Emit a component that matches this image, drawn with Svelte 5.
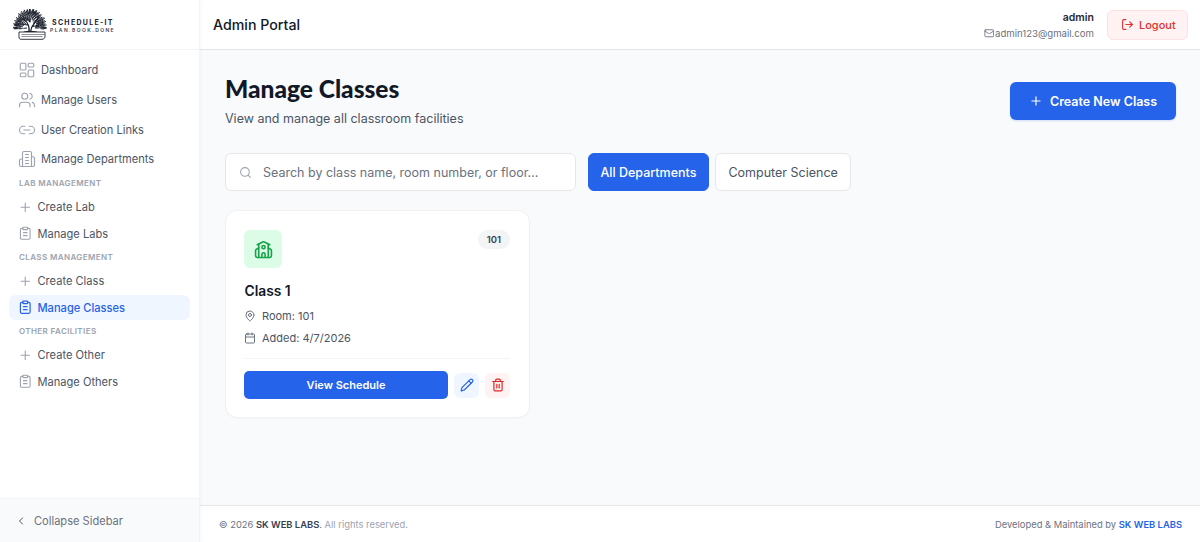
<script>
  const top = [
    { label: 'Dashboard', icon: 'grid' },
    { label: 'Manage Users', icon: 'users' },
    { label: 'User Creation Links', icon: 'link' },
    { label: 'Manage Departments', icon: 'building' }
  ];
  const sections = [
    { title: 'LAB MANAGEMENT', items: [{ label: 'Create Lab', icon: 'plus' }, { label: 'Manage Labs', icon: 'clip' }] },
    { title: 'CLASS MANAGEMENT', items: [{ label: 'Create Class', icon: 'plus' }, { label: 'Manage Classes', icon: 'clip', active: true }] },
    { title: 'OTHER FACILITIES', items: [{ label: 'Create Other', icon: 'plus' }, { label: 'Manage Others', icon: 'clip' }] }
  ];
  // Feathery canopy of the logo tree: short radial leaf strokes on a dome.
  const leaves = Array.from({ length: 135 }, (_, i) => {
    const t = (i * 0.618034) % 1;
    const a = Math.PI * (0.96 + 1.08 * t);
    const r = 5.500 + 12 * Math.sqrt(((i * 0.7548777) % 1));
    const x = 17 + Math.cos(a) * r * 0.88;
    const y = 18.5 + Math.sin(a) * r * 1.0;
    const dx = Math.cos(a) * 1.500;
    const dy = Math.sin(a) * 1.500;
    return { x1: x - dx, y1: y - dy, x2: x + dx, y2: y + dy };
  });
</script>

{#snippet navIcon(name)}
  <svg class="ic" viewBox="0 0 24 24" fill="none" stroke="currentColor" stroke-linecap="round" stroke-linejoin="round">
    {#if name === 'grid'}
      <rect x="3" y="3" width="7.5" height="9" rx="1.5" /><rect x="13.5" y="3" width="7.5" height="5" rx="1.5" /><rect x="13.5" y="12" width="7.5" height="9" rx="1.5" /><rect x="3" y="16" width="7.5" height="5" rx="1.5" />
    {:else if name === 'users'}
      <path d="M16 21v-2a4 4 0 0 0-4-4H6a4 4 0 0 0-4 4v2" /><circle cx="9" cy="7" r="4" /><path d="M22 21v-2a4 4 0 0 0-3-3.87" /><path d="M16 3.13a4 4 0 0 1 0 7.75" />
    {:else if name === 'link'}
      <path d="M9 17H7A5 5 0 0 1 7 7h2" /><path d="M15 7h2a5 5 0 1 1 0 10h-2" /><line x1="8" y1="12" x2="16" y2="12" />
    {:else if name === 'building'}
      <path d="M6 22V4a2 2 0 0 1 2-2h8a2 2 0 0 1 2 2v18Z" /><path d="M6 12H4a2 2 0 0 0-2 2v6a2 2 0 0 0 2 2h2" /><path d="M18 9h2a2 2 0 0 1 2 2v9a2 2 0 0 1-2 2h-2" /><path d="M10 6h4M10 10h4M10 14h4M10 18h4" />
    {:else if name === 'plus'}
      <path d="M5 12h14M12 5v14" />
    {:else if name === 'clip'}
      <rect x="8" y="2" width="8" height="4" rx="1" /><path d="M16 4h2a2 2 0 0 1 2 2v14a2 2 0 0 1-2 2H6a2 2 0 0 1-2-2V6a2 2 0 0 1 2-2h2" /><path d="M9 11h6M9 16h6" />
    {/if}
  </svg>
{/snippet}

<div class="app">
  <aside class="sidebar">
    <div class="brand">
      <svg class="tree" viewBox="0 0 34 32" aria-hidden="true">
        <g stroke="#1f2430" stroke-width="1" stroke-linecap="round">
          {#each leaves as l}
            <line x1={l.x1} y1={l.y1} x2={l.x2} y2={l.y2} />
          {/each}
        </g>
        <g stroke="#1f2430" fill="none" stroke-linecap="round">
          <path d="M16 23c.6-3.500.2-6-2-9.500M14 13.500L9 9M14.500 16l-7-1" stroke-width="1.200" />
          <path d="M17.500 23c.4-3.500 1.500-6 4-9l3.500-4M19 17.500l6.500-1" stroke-width="1.200" />
        </g>
        <path d="M11 23c3-.7 9-.7 13 0" stroke="#1f2430" stroke-width="1.100" fill="none" />
        <path d="M6 23h26v5.500l-2 1.800H8c-1.400 0-2-.8-2-2.300z" fill="#fff" stroke="#1f2430" stroke-width=".9" />
        <path d="M8.500 25.500h23M8.500 27.500h21" stroke="#1f2430" stroke-width=".5" />
      </svg>
      <div class="brand-text">
        <div class="brand-name">SCHEDULE-IT</div>
        <div class="brand-sub">PLAN.BOOK.DONE</div>
      </div>
    </div>

    <nav class="nav">
      <div class="top-links">
        {#each top as item}
          <div class="top-link">{@render navIcon(item.icon)}<span>{item.label}</span></div>
        {/each}
      </div>
      {#each sections as s}
        <div class="sec-title">{s.title}</div>
        {#each s.items as item}
          <div class="sub-link" class:active={item.active}>{@render navIcon(item.icon)}<span>{item.label}</span></div>
        {/each}
      {/each}
    </nav>

    <div class="collapse">
      <svg viewBox="0 0 24 24" fill="none" stroke="currentColor" stroke-width="2" stroke-linecap="round" stroke-linejoin="round"><path d="m15 18-6-6 6-6" /></svg>
      <span>Collapse Sidebar</span>
    </div>
  </aside>

  <div class="right">
    <header class="header">
      <div class="portal">Admin Portal</div>
      <div class="head-right">
        <div class="user">
          <div class="user-name">admin</div>
          <div class="user-mail">
            <svg viewBox="0 0 24 24" fill="none" stroke="currentColor" stroke-width="2" stroke-linecap="round" stroke-linejoin="round"><rect x="2" y="4" width="20" height="16" rx="2" /><path d="m22 7-8.970 5.700a1.940 1.940 0 0 1-2.060 0L2 7" /></svg>
            admin123@gmail.com
          </div>
        </div>
        <button class="logout">
          <svg viewBox="0 0 24 24" fill="none" stroke="currentColor" stroke-width="2" stroke-linecap="round" stroke-linejoin="round"><path d="M9 21H5a2 2 0 0 1-2-2V5a2 2 0 0 1 2-2h4" /><path d="m16 17 5-5-5-5" /><path d="M21 12H9" /></svg>
          Logout
        </button>
      </div>
    </header>

    <main class="main">
      <div class="title-row">
        <div class="title-block">
          <h1>Manage Classes</h1>
          <p>View and manage all classroom facilities</p>
        </div>
        <button class="create">
          <svg viewBox="0 0 24 24" fill="none" stroke="currentColor" stroke-width="2" stroke-linecap="round"><path d="M5 12h14M12 5v14" /></svg>
          Create New Class
        </button>
      </div>

      <div class="filters">
        <div class="search">
          <svg viewBox="0 0 24 24" fill="none" stroke="currentColor" stroke-width="2" stroke-linecap="round"><circle cx="11" cy="11" r="8" /><path d="m21 21-4.300-4.300" /></svg>
          <span>Search by class name, room number, or floor...</span>
        </div>
        <button class="tab on">All Departments</button>
        <button class="tab">Computer Science</button>
      </div>

      <article class="card">
        <div class="card-top">
          <div class="school">
            <svg viewBox="0 0 24 24" fill="none" stroke="currentColor" stroke-width="2" stroke-linecap="round" stroke-linejoin="round"><path d="M14 22v-4a2 2 0 1 0-4 0v4" /><path d="m18 10 3.450 1.930A2 2 0 0 1 22 13.500V20a2 2 0 0 1-2 2H4a2 2 0 0 1-2-2v-6.500a2 2 0 0 1 .55-1.570L6 10" /><path d="M18 5v17" /><path d="m4 6 7.100-3.550a2 2 0 0 1 1.800 0L20 6" /><path d="M6 5v17" /><circle cx="12" cy="9" r="2" /></svg>
          </div>
          <span class="badge">101</span>
        </div>
        <h2>Class 1</h2>
        <div class="metas">
          <div class="meta">
            <svg viewBox="0 0 24 24" fill="none" stroke="currentColor" stroke-width="2" stroke-linecap="round" stroke-linejoin="round"><path d="M20 10c0 5-5.500 10.200-7.400 11.800a1 1 0 0 1-1.200 0C9.500 20.200 4 15 4 10a8 8 0 0 1 16 0" /><circle cx="12" cy="10" r="3" /></svg>
            Room: 101
          </div>
          <div class="meta">
            <svg viewBox="0 0 24 24" fill="none" stroke="currentColor" stroke-width="2" stroke-linecap="round" stroke-linejoin="round"><path d="M8 2v4M16 2v4" /><rect x="3" y="4" width="18" height="18" rx="2" /><path d="M3 10h18" /></svg>
            Added: 4/7/2026
          </div>
        </div>
        <div class="actions">
          <button class="view">View Schedule</button>
          <button class="sq edit" aria-label="Edit">
            <svg viewBox="0 0 24 24" fill="none" stroke="currentColor" stroke-width="2" stroke-linecap="round" stroke-linejoin="round"><path d="M21.170 6.810a1 1 0 0 0-3.990-3.990L3.840 16.170a2 2 0 0 0-.5.830l-1.320 4.350a.5.500 0 0 0 .62.620l4.350-1.320a2 2 0 0 0 .83-.5z" /><path d="m15 5 4 4" /></svg>
          </button>
          <button class="sq del" aria-label="Delete">
            <svg viewBox="0 0 24 24" fill="none" stroke="currentColor" stroke-width="2" stroke-linecap="round" stroke-linejoin="round"><path d="M3 6h18" /><path d="M19 6v14c0 1-1 2-2 2H7c-1 0-2-1-2-2V6" /><path d="M8 6V4c0-1 1-2 2-2h4c1 0 2 1 2 2v2" /><path d="M10 11v6M14 11v6" /></svg>
          </button>
        </div>
      </article>
    </main>

    <footer class="footer">
      <div>© 2026 <b>SK WEB LABS</b>. <span class="muted">All rights reserved.</span></div>
      <div>Developed &amp; Maintained by <b class="blue">SK WEB LABS</b></div>
    </footer>
  </div>
</div>

<style>
  :global(body) { margin: 0; background: #f9fafb; }
  * { box-sizing: border-box; }
  .app { display: flex; width: 1200px; height: 542px; overflow: hidden; font-family: Inter, "Liberation Sans", sans-serif; color: #111827; }
  button { font-family: inherit; cursor: pointer; }

  .sidebar { width: 200px; flex: none; display: flex; flex-direction: column; background: #fff; border-right: 1px solid #f3f4f6; box-shadow: 1px 0 3px rgba(0,0,0,.03); z-index: 2; }
  .brand { height: 50px; flex: none; display: flex; align-items: center; gap: 3px; padding-left: 13px; border-bottom: 1px solid #f3f4f6; }
  .tree { width: 34px; height: 32px; flex: none; margin-top: 1px; }
  .brand-text { margin-top: 3px; }
  .brand-name { font-weight: 700; font-size: 7px; letter-spacing: 1.300px; color: #1f2430; line-height: 9px; padding-left: 2px; }
  .brand-sub { font-weight: 600; font-size: 5px; letter-spacing: 1.400px; color: #374151; line-height: 7px; }

  .nav { flex: 1; display: flex; flex-direction: column; padding: 5.500px 9px 0; }
  .top-links { display: flex; flex-direction: column; margin-bottom: -1.300px; }
  .top-link { height: 29.700px; display: flex; align-items: center; gap: 5.500px; padding-left: 8.500px; font-size: 11.100px; color: #4b5563; }
  .top-link .ic { width: 18px; height: 18px; color: #9ca3af; flex: none; stroke-width: 1.500; }
  .sec-title { height: 21px; flex: none; display: flex; align-items: center; padding-left: 10px; font-size: 8px; font-weight: 600; letter-spacing: .4px; color: #9ca3af; line-height: 1; }
  .sub-link { height: 25px; margin: .75px 0; display: flex; align-items: center; gap: 5px; padding-left: 9px; font-size: 11.100px; color: #4b5563; border-radius: 7px; flex: none; }
  .sub-link .ic { width: 14.500px; height: 14.500px; color: #9ca3af; flex: none; stroke-width: 1.800; }
  .sub-link.active { background: #eff6ff; color: #2563eb; font-weight: 500; }
  .sub-link.active .ic { color: #2563eb; stroke-width: 2; }

  .collapse { height: 44px; flex: none; display: flex; align-items: center; gap: 7px; padding-left: 15px; background: #f9fafb; border-top: 1px solid #f3f4f6; color: #6b7280; font-size: 11.100px; }
  .collapse svg { width: 12px; height: 12px; color: #4b5563; }

  .right { flex: 1; min-width: 0; display: flex; flex-direction: column; }
  .header { height: 50px; flex: none; display: flex; align-items: center; justify-content: space-between; padding: 0 12px 0 13px; background: #fff; border-bottom: 1px solid #e5e7eb; box-shadow: 0 1px 2px rgba(0,0,0,.03); }
  .portal { font-size: 14.200px; font-weight: 500; color: #111827; }
  .head-right { display: flex; align-items: center; gap: 13px; }
  .user { text-align: right; margin-top: 1px; }
  .user-name { font-size: 10.500px; font-weight: 600; color: #1f2937; line-height: 14px; }
  .user-mail { display: flex; align-items: center; justify-content: flex-end; gap: 1px; font-size: 9.600px; color: #6b7280; line-height: 13px; margin-top: 2px; }
  .user-mail svg { width: 10.500px; height: 10.500px; }
  .logout { display: flex; align-items: center; gap: 5px; width: 81px; height: 30px; padding: 0 0 0 13px; background: #fef2f2; border: 1px solid #fee2e2; border-radius: 6px; color: #e03131; font-size: 11px; font-weight: 500; }
  .logout svg { width: 13px; height: 13px; }

  .main { flex: 1; min-height: 0; padding: 27px 24px 0 25px; background: #f9fafb; }
  .title-row { display: flex; justify-content: space-between; align-items: flex-start; }
  .title-block { padding-top: 1px; }
  h1 { margin: 0; font-family: Lato, sans-serif; font-size: 24.500px; font-weight: 900; line-height: 22px; color: #111827; }
  .title-row p { margin: 11px 0 0; font-size: 12.500px; line-height: 16px; color: #4b5563; }
  .create { display: flex; align-items: center; justify-content: center; gap: 7px; width: 166px; height: 38px; margin-top: 5px; background: #2563eb; color: #fff; border: 0; border-radius: 6px; font-size: 12.500px; font-weight: 600; box-shadow: 0 1px 2px rgba(37,99,235,.2); }
  .create svg { width: 14px; height: 14px; }

  .filters { display: flex; gap: 6px; margin-top: 26px; align-items: stretch; height: 38px; }
  .search { width: 351px; margin-right: 6px; display: flex; align-items: center; gap: 11px; padding-left: 13px; background: #fff; border: 1px solid #e5e7eb; border-radius: 6px; color: #6b7280; font-size: 12.500px; }
  .search svg { width: 13px; height: 13px; color: #9ca3af; }
  .tab { padding: 0 12.500px; border: 1px solid #e5e7eb; background: #fff; border-radius: 6px; font-size: 12.500px; color: #4b5563; }
  .tab.on { padding: 0 11.500px; background: #2563eb; border-color: #2563eb; color: #fff; font-weight: 500; }

  .card { width: 305px; height: 208px; margin-top: 19px; padding: 19px 19px 0 18px; background: #fff; border: 1px solid #f0f1f3; border-radius: 12px; box-shadow: 0 1px 2px rgba(0,0,0,.02); }
  .card-top { display: flex; justify-content: space-between; align-items: flex-start; }
  .school { width: 38px; height: 38px; display: flex; align-items: center; justify-content: center; background: #dcfce7; border-radius: 6px; color: #16a34a; }
  .school svg { width: 19px; height: 19px; }
  .badge { height: 19px; padding: 0 9px; border-radius: 10px; background: #f3f4f6; color: #374151; font-size: 9.500px; font-weight: 600; line-height: 19px; }
  h2 { margin: 13px 0 0 .5px; font-size: 13.800px; font-weight: 600; line-height: 20px; color: #111827; }
  .metas { margin-top: 4px; }
  .meta { display: flex; align-items: center; gap: 6px; height: 22px; font-size: 11px; color: #4b5563; }
  .meta svg { width: 12px; height: 12px; color: #6b7280; }
  .actions { display: flex; align-items: center; gap: 6px; margin-top: 9px; padding-top: 12px; border-top: 1px solid #f3f4f6; }
  .view { width: 204px; height: 28px; background: #2563eb; color: #fff; border: 0; border-radius: 5px; font-size: 11px; font-weight: 600; }
  .sq { width: 25px; height: 25px; display: flex; align-items: center; justify-content: center; border: 0; border-radius: 6px; padding: 0; }
  .sq svg { width: 14px; height: 14px; }
  .edit { background: #eff6ff; color: #2563eb; }
  .del { background: #fef2f2; color: #dc2626; }

  .footer { height: 37px; flex: none; display: flex; align-items: center; justify-content: space-between; padding: 0 18px 0 19px; background: #fff; border-top: 1px solid #e5e7eb; font-size: 9.400px; color: #6b7280; }
  .footer b { font-weight: 600; color: #374151; }
  .footer b.blue { color: #2563eb; }
  .muted { color: #9ca3af; }
</style>
